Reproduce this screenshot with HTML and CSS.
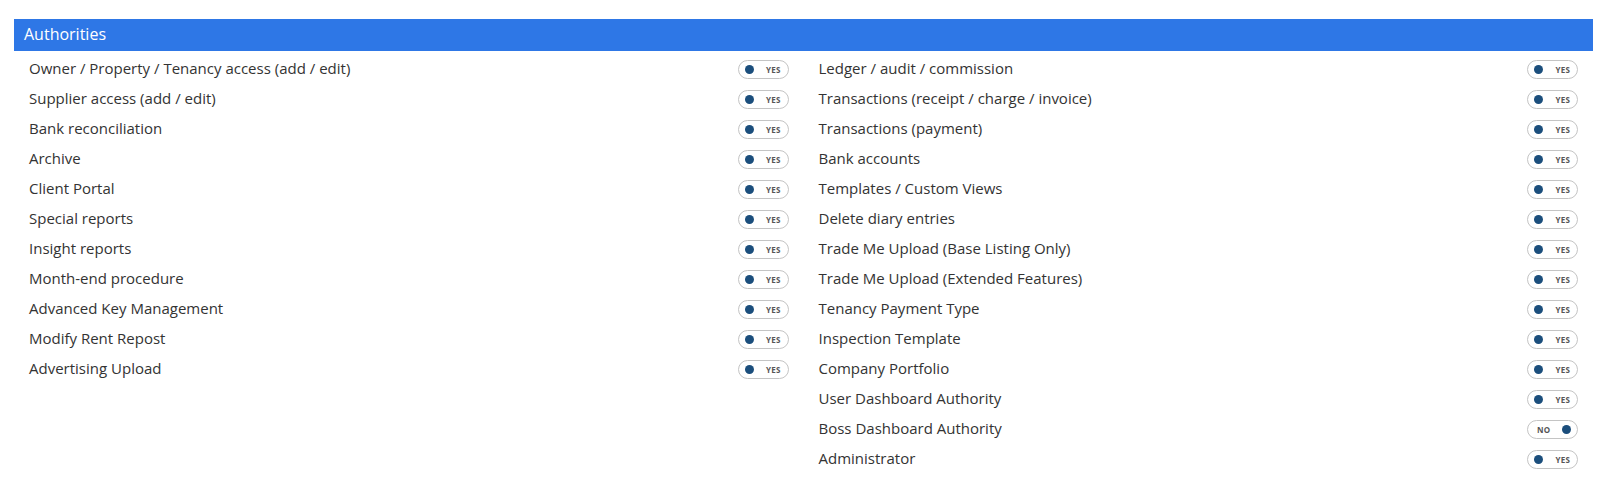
FILE: index.html
```html
<!DOCTYPE html>
<html>
<head>
<meta charset="utf-8">
<link rel="stylesheet" href="styles.css">
</head>
<body>
<div class="panel">
  <div class="panel-head">Authorities</div>
  <div class="panel-body">
    <div class="col">
      <div class="row"><span class="label">Owner / Property / Tenancy access (add / edit)</span><span class="toggle on"><span class="dot"></span><span class="txt">YES</span></span></div>
      <div class="row"><span class="label">Supplier access (add / edit)</span><span class="toggle on"><span class="dot"></span><span class="txt">YES</span></span></div>
      <div class="row"><span class="label">Bank reconciliation</span><span class="toggle on"><span class="dot"></span><span class="txt">YES</span></span></div>
      <div class="row"><span class="label">Archive</span><span class="toggle on"><span class="dot"></span><span class="txt">YES</span></span></div>
      <div class="row"><span class="label">Client Portal</span><span class="toggle on"><span class="dot"></span><span class="txt">YES</span></span></div>
      <div class="row"><span class="label">Special reports</span><span class="toggle on"><span class="dot"></span><span class="txt">YES</span></span></div>
      <div class="row"><span class="label">Insight reports</span><span class="toggle on"><span class="dot"></span><span class="txt">YES</span></span></div>
      <div class="row"><span class="label">Month-end procedure</span><span class="toggle on"><span class="dot"></span><span class="txt">YES</span></span></div>
      <div class="row"><span class="label">Advanced Key Management</span><span class="toggle on"><span class="dot"></span><span class="txt">YES</span></span></div>
      <div class="row"><span class="label">Modify Rent Repost</span><span class="toggle on"><span class="dot"></span><span class="txt">YES</span></span></div>
      <div class="row"><span class="label">Advertising Upload</span><span class="toggle on"><span class="dot"></span><span class="txt">YES</span></span></div>
    </div>
    <div class="col">
      <div class="row"><span class="label">Ledger / audit / commission</span><span class="toggle on"><span class="dot"></span><span class="txt">YES</span></span></div>
      <div class="row"><span class="label">Transactions (receipt / charge / invoice)</span><span class="toggle on"><span class="dot"></span><span class="txt">YES</span></span></div>
      <div class="row"><span class="label">Transactions (payment)</span><span class="toggle on"><span class="dot"></span><span class="txt">YES</span></span></div>
      <div class="row"><span class="label">Bank accounts</span><span class="toggle on"><span class="dot"></span><span class="txt">YES</span></span></div>
      <div class="row"><span class="label">Templates / Custom Views</span><span class="toggle on"><span class="dot"></span><span class="txt">YES</span></span></div>
      <div class="row"><span class="label">Delete diary entries</span><span class="toggle on"><span class="dot"></span><span class="txt">YES</span></span></div>
      <div class="row"><span class="label">Trade Me Upload (Base Listing Only)</span><span class="toggle on"><span class="dot"></span><span class="txt">YES</span></span></div>
      <div class="row"><span class="label">Trade Me Upload (Extended Features)</span><span class="toggle on"><span class="dot"></span><span class="txt">YES</span></span></div>
      <div class="row"><span class="label">Tenancy Payment Type</span><span class="toggle on"><span class="dot"></span><span class="txt">YES</span></span></div>
      <div class="row"><span class="label">Inspection Template</span><span class="toggle on"><span class="dot"></span><span class="txt">YES</span></span></div>
      <div class="row"><span class="label">Company Portfolio</span><span class="toggle on"><span class="dot"></span><span class="txt">YES</span></span></div>
      <div class="row"><span class="label">User Dashboard Authority</span><span class="toggle on"><span class="dot"></span><span class="txt">YES</span></span></div>
      <div class="row"><span class="label">Boss Dashboard Authority</span><span class="toggle off"><span class="txt">NO</span><span class="dot"></span></span></div>
      <div class="row"><span class="label">Administrator</span><span class="toggle on"><span class="dot"></span><span class="txt">YES</span></span></div>
    </div>
  </div>
</div>
</body>
</html>
```

FILE: styles.css
```css
html, body {
  margin: 0;
  padding: 0;
  background: #fff;
}
body {
  font-family: "Open Sans", "Liberation Sans", sans-serif;
  color: #333;
  padding: 19px 27px 0 14px;
}
.panel-head {
  background: #2e77e6;
  color: #fff;
  font-size: 16px;
  height: 32px;
  line-height: 30px;
  padding: 0 10px;
  box-sizing: border-box;
}
.panel-body {
  display: grid;
  grid-template-columns: 1fr 1fr;
  column-gap: 30px;
  padding: 4px 15px 0 15px;
}
.row {
  display: flex;
  align-items: center;
  justify-content: space-between;
  height: 29px;
  margin-bottom: 1px;
}
.label {
  font-size: 15px;
  color: #333;
  padding-bottom: 4px;
}
.toggle {
  display: flex;
  align-items: center;
  box-sizing: border-box;
  width: 51px;
  height: 19px;
  border: 1px solid #c4c4c4;
  border-radius: 10px;
  background: #fff;
  padding: 0 7px 0 6px;
  gap: 0;
}
.toggle.on { justify-content: space-between; }
.toggle.off { justify-content: space-between; padding: 0 6px 0 9px; }
.dot {
  width: 9px;
  height: 9px;
  border-radius: 50%;
  background: #1b4e7c;
}
.txt {
  font-size: 8px;
  font-weight: 700;
  color: #555;
  letter-spacing: 0.2px;
}
```
